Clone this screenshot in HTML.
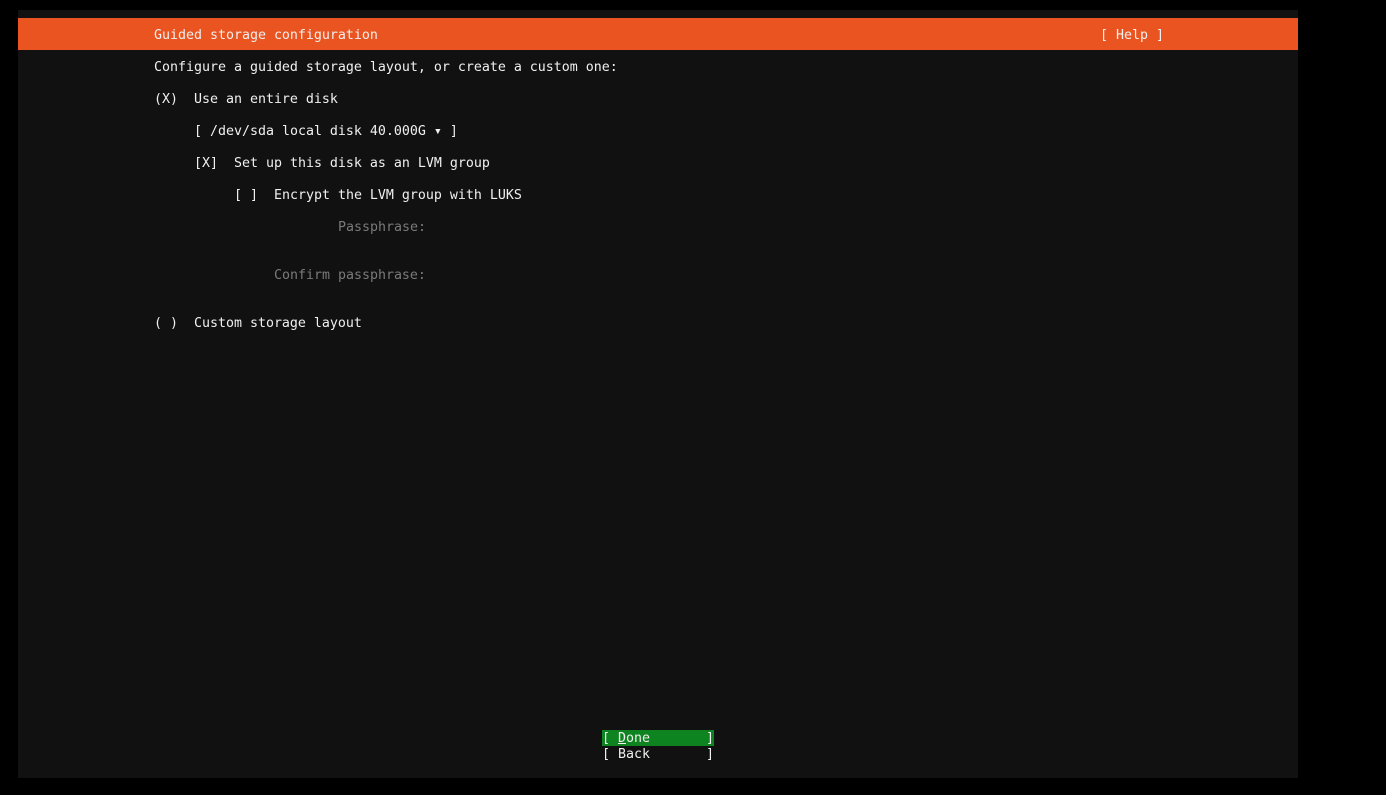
<!DOCTYPE html>
<html><head><meta charset="utf-8"><style>
html,body{margin:0;padding:0;background:#000;width:1386px;height:795px;overflow:hidden}
#p{position:absolute;left:18px;top:10px;width:1280px;height:768px;background:#111}
#h{position:absolute;left:18px;top:18px;width:1280px;height:32px;background:#e95420}
.t{position:absolute;height:16px;line-height:16px;margin-top:2px;font-family:"DejaVu Sans Mono",monospace;font-size:13.29px;color:#f0f0f0;white-space:pre}
.d{color:#7a7a7a}
.b{margin-top:0;padding-top:1px;height:15px}
</style></head><body>
<div id="p"></div><div id="h"></div>
<div class="t" style="left:154px;top:26px">Guided storage configuration</div>
<div class="t" style="left:1100px;top:26px">[ Help ]</div>
<div class="t" style="left:154px;top:58px">Configure a guided storage layout, or create a custom one:</div>
<div class="t" style="left:154px;top:90px">(X)  Use an entire disk</div>
<div class="t" style="left:194px;top:122px">[ /dev/sda local disk 40.000G ▾ ]</div>
<div class="t" style="left:194px;top:154px">[X]  Set up this disk as an LVM group</div>
<div class="t" style="left:234px;top:186px">[ ]  Encrypt the LVM group with LUKS</div>
<div class="t d" style="left:338px;top:218px">Passphrase:</div>
<div class="t d" style="left:274px;top:266px">Confirm passphrase:</div>
<div class="t" style="left:154px;top:314px">( )  Custom storage layout</div>
<div class="t b" style="left:602px;top:730px;width:112px;background:#0e8420">[ <u>D</u>one       ]</div>
<div class="t b" style="left:602px;top:746px">[ Back       ]</div>
</body></html>
